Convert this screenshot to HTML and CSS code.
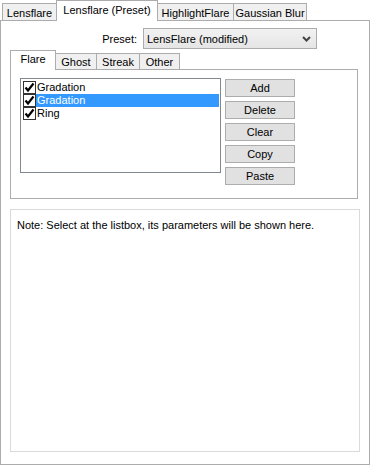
FILE: index.html
```html
<!DOCTYPE html>
<html>
<head>
<meta charset="utf-8">
<link rel="stylesheet" href="styles.css">
</head>
<body>
<div class="window">
  <div class="tabs">
    <div class="tab t1">Lensflare</div>
    <div class="tab active t2">Lensflare (Preset)</div>
    <div class="tab t3">HighlightFlare</div>
    <div class="tab t4">Gaussian Blur</div>
  </div>
  <div class="panel">
    <div class="preset-row">
      <label class="preset-label">Preset:</label>
      <div class="combo">
        <span class="combo-text">LensFlare (modified)</span>
        <svg class="chev" width="9" height="6" viewBox="0 0 9 6"><polyline points="1,1 4.5,4.5 8,1" fill="none" stroke="#444" stroke-width="2"/></svg>
      </div>
    </div>
    <div class="itabs">
      <div class="itab active i1">Flare</div>
      <div class="itab i2">Ghost</div>
      <div class="itab i3">Streak</div>
      <div class="itab i4">Other</div>
    </div>
    <div class="ipanel">
      <div class="listbox">
        <div class="row">
          <span class="cb"><svg width="11" height="11" viewBox="0 0 11 11"><polyline points="1.5,5.5 4,8.5 9.5,1.5" fill="none" stroke="#000" stroke-width="2.2"/></svg></span>
          <span class="lbl">Gradation</span>
        </div>
        <div class="row sel">
          <span class="cb"><svg width="11" height="11" viewBox="0 0 11 11"><polyline points="1.5,5.5 4,8.5 9.5,1.5" fill="none" stroke="#000" stroke-width="2.2"/></svg></span>
          <span class="lbl">Gradation</span>
        </div>
        <div class="row">
          <span class="cb"><svg width="11" height="11" viewBox="0 0 11 11"><polyline points="1.5,5.5 4,8.5 9.5,1.5" fill="none" stroke="#000" stroke-width="2.2"/></svg></span>
          <span class="lbl">Ring</span>
        </div>
      </div>
      <div class="buttons">
        <button class="btn">Add</button>
        <button class="btn">Delete</button>
        <button class="btn">Clear</button>
        <button class="btn">Copy</button>
        <button class="btn">Paste</button>
      </div>
    </div>
    <div class="note">Note: Select at the listbox, its parameters will be shown here.</div>
  </div>
</div>
</body>
</html>
```

FILE: styles.css
```css
html, body {
  margin: 0;
  padding: 0;
  background: #ffffff;
}
body {
  font-family: "Liberation Sans", Arial, sans-serif;
  font-size: 11px;
  color: #000;
}
.window {
  width: 370px;
  height: 466px;
  background: #ffffff;
}
.tabs {
  display: flex;
  align-items: flex-end;
  height: 20px;
  padding-left: 2px;
}
.tab {
  box-sizing: border-box;
  height: 17px;
  border: 1px solid #acacac;
  border-bottom: none;
  background: #f0f0f0;
  display: flex;
  align-items: center;
  justify-content: center;
  line-height: 14px;
  margin-left: -1px;
  white-space: nowrap;
  padding-top: 1px;
}
.tab.t1 { margin-left: 0; width: 55px; }
.tab.t2 { width: 102px; }
.tab.t3 { width: 77px; }
.tab.t4 { width: 74px; }
.tab.active {
  height: 21px;
  margin-bottom: -1px;
  background: #ffffff;
  position: relative;
  z-index: 1;
  padding-top: 0;
  padding-bottom: 2px;
}
.panel {
  box-sizing: border-box;
  width: 370px;
  height: 445px;
  border: 1px solid #acacac;
  background: #ffffff;
  padding: 7px 0 0 9px;
}
.preset-row {
  display: flex;
  align-items: center;
  height: 21px;
}
.preset-label {
  width: 127px;
  text-align: right;
  margin-right: 6px;
}
.combo {
  box-sizing: border-box;
  width: 174px;
  height: 21px;
  border: 1px solid #acacac;
  background: linear-gradient(#f2f2f2, #e5e5e5);
  display: flex;
  align-items: center;
  padding-left: 3px;
  padding-right: 5px;
}
.combo-text { flex: 1; }
.chev { display: block; }
.itabs {
  display: flex;
  align-items: flex-end;
  height: 19px;
  margin-top: 1px;
}
.itab {
  box-sizing: border-box;
  height: 16px;
  border: 1px solid #acacac;
  border-bottom: none;
  background: #f0f0f0;
  display: flex;
  align-items: center;
  justify-content: center;
  margin-left: -1px;
  white-space: nowrap;
  padding-top: 1px;
}
.itab.i1 { margin-left: 0; width: 46px; }
.itab.i2 { width: 42px; }
.itab.i3 { width: 44px; }
.itab.i4 { width: 41px; }
.itab.active {
  height: 20px;
  margin-bottom: -1px;
  background: #ffffff;
  position: relative;
  z-index: 1;
  padding-top: 0;
  padding-bottom: 3px;
}
.ipanel {
  box-sizing: border-box;
  width: 348px;
  height: 130px;
  border: 1px solid #acacac;
  padding: 8px 0 0 9px;
  display: flex;
  align-items: flex-start;
}
.listbox {
  box-sizing: border-box;
  width: 201px;
  height: 95px;
  border: 1px solid #828790;
  background: #fff;
  padding: 2px 1px 0 2px;
}
.row {
  display: flex;
  height: 13px;
  align-items: stretch;
}
.cb {
  box-sizing: border-box;
  width: 13px;
  height: 13px;
  border: 1px solid #333;
  background: #fff;
  display: flex;
  align-items: center;
  justify-content: center;
}
.cb svg { display: block; }
.lbl {
  flex: 1;
  padding-left: 1px;
  line-height: 13px;
}
.row.sel .lbl {
  background: #3399ff;
  color: #fff;
}
.buttons {
  display: flex;
  flex-direction: column;
  gap: 4px;
  margin-left: 4px;
  margin-top: 1px;
}
.btn {
  box-sizing: border-box;
  width: 70px;
  height: 18px;
  border: 1px solid #adadad;
  background: #e1e1e1;
  font-family: "Liberation Sans", Arial, sans-serif;
  font-size: 11px;
  color: #000;
  padding: 0;
  margin: 0;
  line-height: 14px;
}
.note {
  box-sizing: border-box;
  width: 350px;
  height: 243px;
  margin-top: 10px;
  border: 1px solid #dadada;
  padding: 9px 0 0 6px;
  line-height: 13px;
}
```
